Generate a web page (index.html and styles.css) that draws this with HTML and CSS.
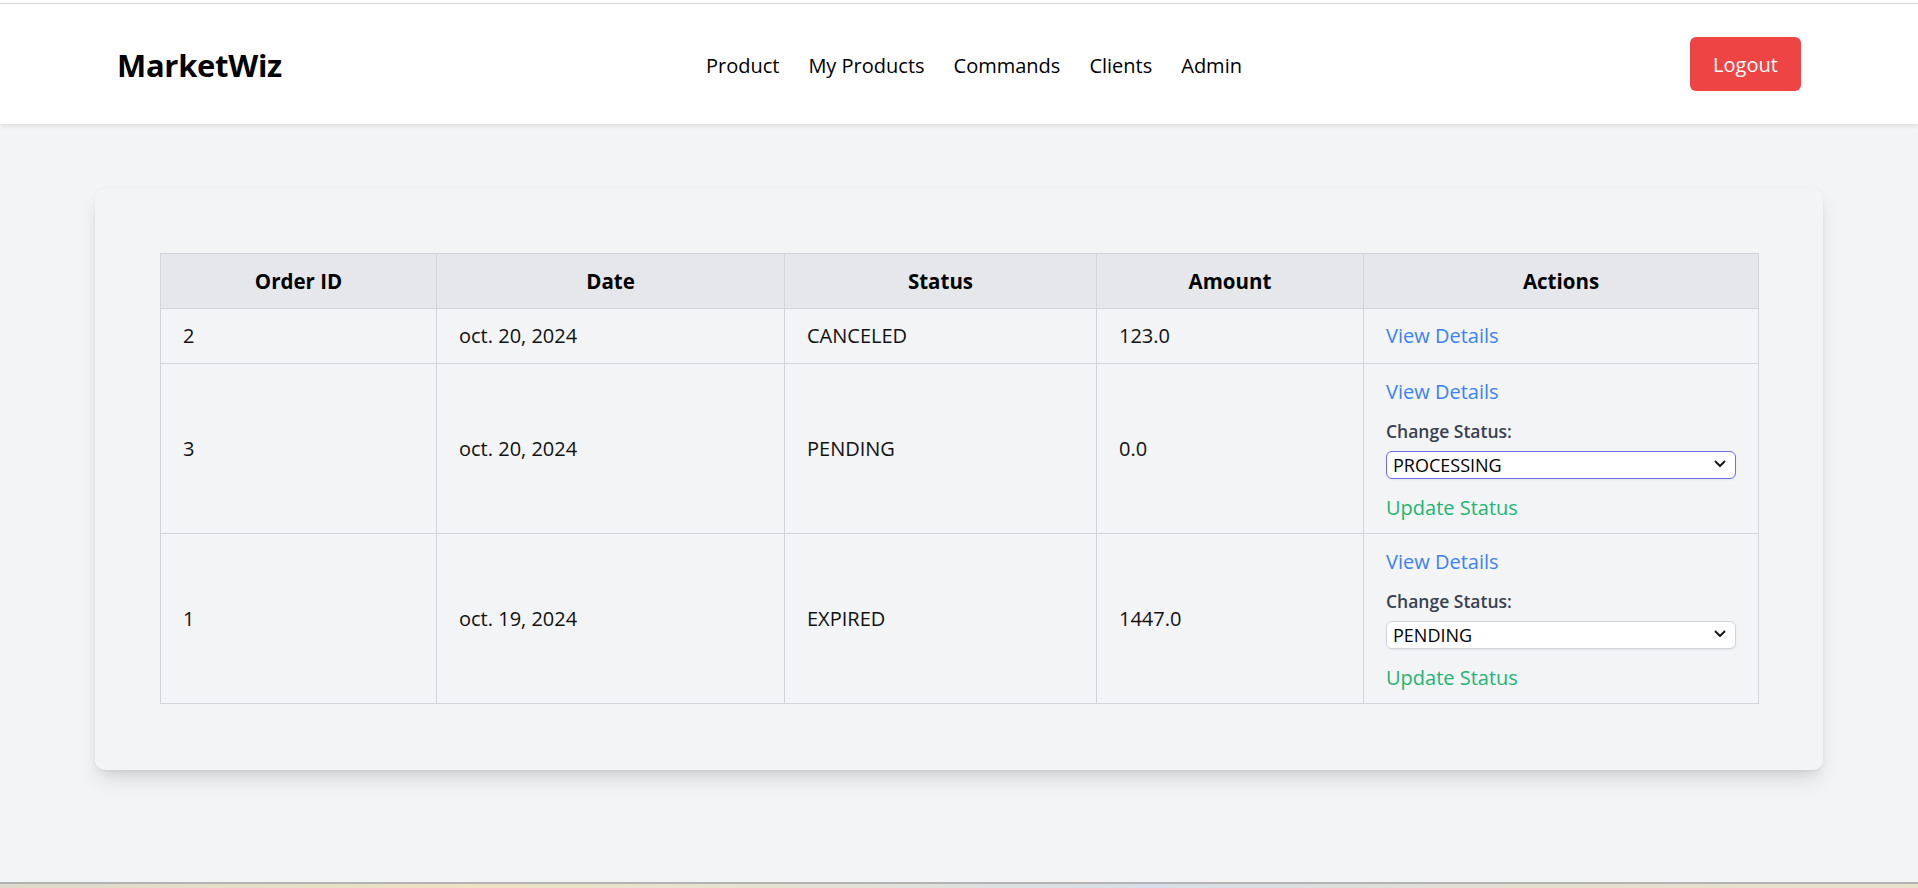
FILE: index.html
```html
<!DOCTYPE html>
<html lang="en">
<head>
<meta charset="utf-8">
<title>MarketWiz - Commands</title>
<link rel="stylesheet" href="styles.css">
</head>
<body>
<div class="page">
  <div class="chrome"></div>
  <header class="navbar">
    <div class="logo">MarketWiz</div>
    <nav class="nav">
      <a class="nav-link" href="#">Product</a>
      <a class="nav-link" href="#">My Products</a>
      <a class="nav-link" href="#">Commands</a>
      <a class="nav-link" href="#">Clients</a>
      <a class="nav-link" href="#">Admin</a>
    </nav>
    <button class="logout">Logout</button>
  </header>
  <main class="main">
    <section class="card">
      <table class="orders">
        <colgroup>
          <col class="c-id"><col class="c-date"><col class="c-status"><col class="c-amount"><col class="c-actions">
        </colgroup>
        <thead>
          <tr>
            <th>Order ID</th><th>Date</th><th>Status</th><th>Amount</th><th>Actions</th>
          </tr>
        </thead>
        <tbody>
          <tr>
            <td>2</td><td>oct. 20, 2024</td><td>CANCELED</td><td>123.0</td>
            <td class="actions"><a class="view" href="#">View Details</a></td>
          </tr>
          <tr>
            <td>3</td><td>oct. 20, 2024</td><td>PENDING</td><td>0.0</td>
            <td class="actions">
              <a class="view" href="#">View Details</a>
              <label class="status-label">Change Status:</label>
              <div class="select-wrap">
                <select class="status-select focused">
                  <option>PENDING</option>
                  <option selected>PROCESSING</option>
                  <option>COMPLETED</option>
                  <option>CANCELED</option>
                </select>
                <svg class="chev" width="12" height="8" viewBox="0 0 12 8"><path d="M1.5 1.5 L6 6 L10.5 1.5" fill="none" stroke="#111" stroke-width="1.8" stroke-linecap="round" stroke-linejoin="round"/></svg>
              </div>
              <a class="update" href="#">Update Status</a>
            </td>
          </tr>
          <tr>
            <td>1</td><td>oct. 19, 2024</td><td>EXPIRED</td><td>1447.0</td>
            <td class="actions">
              <a class="view" href="#">View Details</a>
              <label class="status-label">Change Status:</label>
              <div class="select-wrap">
                <select class="status-select">
                  <option selected>PENDING</option>
                  <option>PROCESSING</option>
                  <option>COMPLETED</option>
                  <option>CANCELED</option>
                </select>
                <svg class="chev" width="12" height="8" viewBox="0 0 12 8"><path d="M1.5 1.5 L6 6 L10.5 1.5" fill="none" stroke="#111" stroke-width="1.8" stroke-linecap="round" stroke-linejoin="round"/></svg>
              </div>
              <a class="update" href="#">Update Status</a>
            </td>
          </tr>
        </tbody>
      </table>
    </section>
  </main>
  <div class="taskbar"></div>
</div>
</body>
</html>
```
FILE: styles.css
```css
* { box-sizing: border-box; }
html, body { margin: 0; padding: 0; }
body {
  font-family: "Open Sans", "Noto Sans", "Liberation Sans", sans-serif;
  background: #f3f4f6;
  color: #111;
}
.page {
  height: 888px;
  display: flex;
  flex-direction: column;
  overflow: hidden;
}
.chrome {
  height: 4px;
  background: #fff;
  border-bottom: 1px solid #dcdcdc;
  flex: none;
}
.navbar {
  flex: none;
  height: 120px;
  background: #fff;
  display: flex;
  align-items: center;
  justify-content: space-between;
  padding: 0 117px;
  box-shadow: 0 2px 4px rgba(0,0,0,0.09);
  position: relative;
  z-index: 1;
}
.logo {
  font-size: 31px;
  font-weight: 700;
  color: #000;
  letter-spacing: -0.3px;
  margin-top: 2px;
}
.nav {
  display: flex;
  gap: 29px;
  margin-left: -24px;
  margin-top: 4px;
}
.nav-link {
  font-size: 20px;
  color: #000;
  text-decoration: none;
  line-height: 30px;
}
.logout {
  width: 111px;
  height: 54px;
  border: none;
  border-radius: 6px;
  background: #ef4444;
  color: #fff;
  font-family: inherit;
  font-size: 20px;
  margin-top: 0;
}
.main {
  flex: 1;
  padding: 64px 95px 0;
}
.card {
  background: #f3f4f6;
  border-radius: 10px;
  padding: 65px 65px 66px;
  box-shadow: 0 12px 20px -4px rgba(0,0,0,0.13), 0 4px 8px -4px rgba(0,0,0,0.09), 0 0 3px rgba(0,0,0,0.04);
}
.orders {
  width: 100%;
  border-collapse: collapse;
  table-layout: fixed;
}
.c-id { width: 276px; }
.c-date { width: 348px; }
.c-status { width: 312px; }
.c-amount { width: 267px; }
.c-actions { width: 395px; }
.orders th, .orders td {
  border: 1px solid #d1d5db;
  padding: 12px 22px;
  font-size: 20px;
  line-height: 30px;
  text-align: left;
}
.orders th {
  background: #e5e7eb;
  font-weight: 700;
  text-align: center;
  color: #000;
  font-size: 20.5px;
}
.orders td { color: #111; }
.orders td.actions { padding-top: 13px; padding-bottom: 10px; }
.orders tbody tr:first-child td.actions { padding-top: 12px; padding-bottom: 12px; }
.actions a { display: block; text-decoration: none; }
.view { color: #3b82f6; }
.update { color: #22b573; margin-top: 15px; }
.status-label {
  display: block;
  margin-top: 12px;
  font-size: 17.5px;
  line-height: 25px;
  font-weight: 600;
  color: #374151;
}
.select-wrap {
  position: relative;
  margin-top: 6px;
  height: 28px;
}
.status-select {
  appearance: none;
  -webkit-appearance: none;
  width: 100%;
  height: 28px;
  border: 1px solid #d1d5db;
  border-radius: 6px;
  background: #fff;
  font-family: inherit;
  font-size: 18px;
  color: #000;
  padding: 0 30px 0 6px;
  box-shadow: 0 1px 2px rgba(0,0,0,0.06);
}
.status-select.focused {
  border-color: #6b6ef0;
}
.chev {
  position: absolute;
  right: 10px;
  top: 10px;
  pointer-events: none;
}
.taskbar {
  flex: none;
  height: 6px;
  border-top: 2px solid #b3b3b3;
  background: linear-gradient(90deg, #ded9cc 0%, #eee2c4 25%, #e3e2d8 45%, #d5dee9 60%, #e5dfd0 80%, #ebe0cc 100%);
}
```
